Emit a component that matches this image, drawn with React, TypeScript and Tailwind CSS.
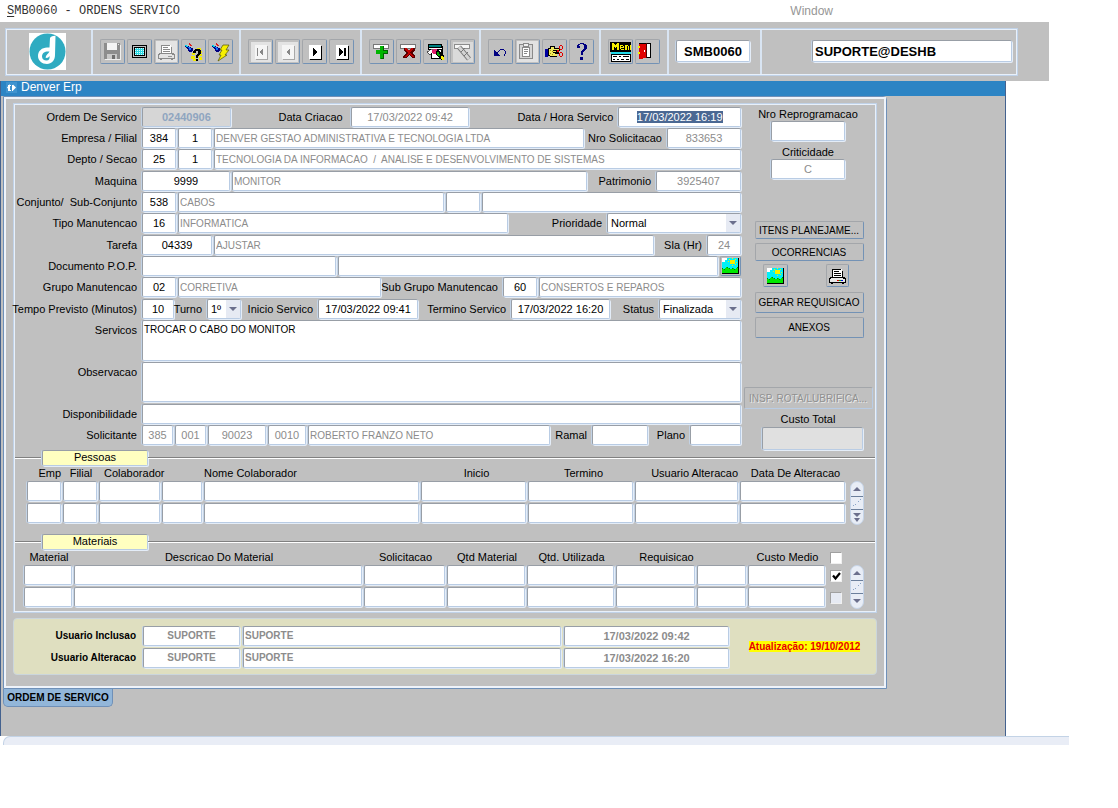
import React, { useEffect, useRef } from "react";

/* ---------- form primitives ---------- */

const BOX =
  "min-w-0 rounded-[2px] border border-t-[#989ea6] border-l-[#989ea6] border-r-[#b9cce4] border-b-[#b9cce4] shadow-[1px_1px_0_#e4edf8,-1px_0_0_#c3d3e6] outline-none";

type FieldProps = {
  id: string;
  label?: string;
  value?: string;
  w?: string;
  tone?: string;
  align?: string;
  h?: string;
};

function Field({
  id,
  label,
  value = "",
  w = "flex-1",
  tone = "bg-white text-black",
  align = "text-center text-[11px]",
  h = "h-5",
}: FieldProps) {
  return (
    <input
      id={id}
      aria-label={label}
      defaultValue={value}
      className={`${BOX} ${h} ${w} ${tone} ${align} px-px`}
    />
  );
}

const DIM = "bg-white text-[#8c8c8c]";
const NAME = "text-left text-[10px]";

function Label({
  to,
  w = "w-[125px]",
  children,
}: {
  to: string;
  w?: string;
  children: React.ReactNode;
}) {
  return (
    <label
      htmlFor={to}
      className={`${w} flex h-5 shrink-0 items-center justify-end pr-[3px] whitespace-pre`}
    >
      {children}
    </label>
  );
}

function Row({ children, h = "h-[21px]" }: { children: React.ReactNode; h?: string }) {
  return <div className={`flex ${h} items-start gap-[2px]`}>{children}</div>;
}

function Select({
  id,
  value,
  options,
  w,
}: {
  id: string;
  value: string;
  options: string[];
  w: string;
}) {
  return (
    <div className={`grid ${w} h-5 shrink-0`}>
      <select
        id={id}
        defaultValue={value}
        className={`${BOX} col-start-1 row-start-1 h-5 w-full appearance-none bg-white pl-[3px] text-[11px] text-black`}
      >
        {options.map((o) => (
          <option key={o}>{o}</option>
        ))}
      </select>
      <span className="pointer-events-none col-start-1 row-start-1 my-px mr-px flex w-[14px] items-center justify-center justify-self-end bg-[#e6eaf3]">
        <svg width="8" height="4" viewBox="0 0 8 4">
          <path d="M0 0h8L4 4z" fill="#6b6f8c" />
        </svg>
      </span>
    </div>
  );
}

const BTN =
  "flex items-center justify-center rounded-[2px] border border-t-[#a3a6aa] border-l-[#a3a6aa] border-r-[#7392b5] border-b-[#7392b5] bg-[#c0c0c0]";

function TextButton({ children, h }: { children: React.ReactNode; h: string }) {
  return (
    <button type="button" className={`${BTN} ${h} w-[109px] text-[10px] whitespace-nowrap text-black`}>
      {children}
    </button>
  );
}

/* ---------- icons ---------- */

function Icon({ children }: { children: React.ReactNode }) {
  return (
    <svg width="23" height="23" viewBox="1 1 23 23" shapeRendering="crispEdges" className="shrink-0">
      {children}
    </svg>
  );
}

const SaveIcon = (
  <Icon>
    <path d="M4 4h16v17H5l-1-1z" fill="#8d8d8d" />
    <path d="M7 4h10v7H7z" fill="#f4f4f4" />
    <path d="M7 15h10v5H7z" fill="#c9c9c9" />
    <path d="M12 16h3v4h-3z" fill="#6f6f6f" />
    <path d="M18 5h1v1h-1z" fill="#e8e8e8" />
    <path d="M5 21h16V6h-1v14H5z" fill="#efefef" />
  </Icon>
);

const ScreenIcon = (
  <Icon>
    <rect x="5" y="6" width="15" height="13" rx="1" fill="#000" />
    <path d="M6 7h13v11H6z" fill="#c0c0c0" />
    <path d="M7 8h11v9H7z" fill="#000" />
    <path d="M8 9h9v7H8z" fill="#2fd8e2" />
    <path
      d="M8 9h1v1H8zM10 9h1v1h-1zM12 9h1v1h-1zM14 9h1v1h-1zM16 9h1v1h-1zM8 11h1v1H8zM10 11h1v1h-1zM12 11h1v1h-1zM14 11h1v1h-1zM16 11h1v1h-1zM8 13h1v1H8zM10 13h1v1h-1zM12 13h1v1h-1zM14 13h1v1h-1zM16 13h1v1h-1zM8 15h1v1H8zM10 15h1v1h-1zM12 15h1v1h-1zM14 15h1v1h-1zM16 15h1v1h-1z"
      fill="#d8ffff"
    />
  </Icon>
);

function Printer({ dim = false }: { dim?: boolean }) {
  const ink = dim ? "#8a8a8a" : "#000";
  return (
    <Icon>
      {dim && <path d="M2 2h21v21H2z" fill="#e4e4e4" />}
      <path d="M7 6h10v9H7z" fill="#fff" />
      <path d="M7 6h9v1H8v7H7zM17 8h1v7h-1z" fill={ink} />
      <path d="M9 8h5v1H9zM9 10h7v1H9zM9 12h7v1H9z" fill={ink} />
      <path d="M5 14h14l2 2v4H4v-4z" fill={ink} />
      <path d="M6 15h12v1H6zM5 16h15v3H5z" fill={dim ? "#e4e4e4" : "#e8e8e8"} />
      <path d="M6 20h2v1H6zM17 20h2v1h-2z" fill={ink} />
      {dim ? (
        <path d="M14 17h4v1h-4z" fill="#999" />
      ) : (
        <>
          <path d="M12 17h2v1h-2z" fill="#e00000" />
          <path d="M14 17h2v1h-2z" fill="#00b000" />
          <path d="M16 17h2v1h-2z" fill="#0000e0" />
        </>
      )}
    </Icon>
  );
}

const Torch = (
  <>
    <path d="M4 6h2v1h2v1h2v1h2v3h-1v1H8v-1H7v-2H6V9H5V8H4z" fill="#000080" />
    <path d="M4 6h2v1h1v1H5V7H4z" fill="#00d8e8" />
    <path d="M8 4h1v1h1v1h1v1H9V6H8z" fill="#e02020" />
    <path d="M7 8h2v1h1v2H8V9H7z" fill="#1070ff" />
    <path d="M10 7h1v2h-1z" fill="#c0c0c0" />
  </>
);

const QueryIcon = (
  <Icon>
    {Torch}
    <path
      d="M16 9h4v2h-4zM17 12h4v2h-4zM11 14h3v2h-3zM18 15h3v2h-3zM10 17h4v3h-4zM18 18h3v3h-3zM12 20h3v2h-3zM16 16h2v2h-2z"
      fill="#f2ea00"
    />
    <path d="M12 14v-2l2-2h4l2 2v3l-3 2v2h-2v-3l2-2v-2h-2v2z" fill="#000" />
    <path d="M15 20h2v2h-2z" fill="#000" />
  </Icon>
);

const RunQueryIcon = (
  <Icon>
    {Torch}
    <path
      d="M15 6h6l-3 5h3l-4 5h2l-9 6 3-6h-2l3-5h-2z"
      fill="#f7f000"
      stroke="#555500"
      strokeWidth=".7"
      shapeRendering="auto"
    />
  </Icon>
);

function NavIcon({ d, dim = false }: { d: string; dim?: boolean }) {
  return (
    <Icon>
      {dim && <path d="M3 3h20v20H3z" fill="#e3e3e3" />}
      <path d="M8 7h12v14H8z" fill={dim ? "#a8a8a8" : "#000"} />
      <path d="M7 6h12v14H7z" fill={dim ? "#f5f5f5" : "#fff"} />
      <path d={d} fill={dim ? "#888" : "#000"} />
    </Icon>
  );
}

const InsertIcon = (
  <Icon>
    <path d="M4 5h16v5H4z" fill="#777" />
    <path d="M5 6h14v3H5z" fill="#fff" />
    <path d="M11 7h4v4h4v4h-4v5h-4v-5H7v-4h4z" fill="#00b400" />
    <path d="M14 7h1v4h4v4h-4v5h-3v-1h2v-5h4v-2h-4z" fill="#006400" />
  </Icon>
);

const DeleteIcon = (
  <Icon>
    <path d="M4 5h16v5H4z" fill="#777" />
    <path d="M5 6h14v3H5z" fill="#fff" />
    <path d="M8 9h3l2 3 2-3h4v2l-3 3 3 3v2h-3l-3-3-3 3H7v-2l3-3-2-3z" fill="#5a0000" />
    <path d="M9 9h2l2 3 2-3h2v1l-3 4 4 4h-2l-3-3-3 3H9l3-4-3-4z" fill="#c00000" />
  </Icon>
);

const EditIcon = (
  <Icon>
    <path d="M5 5h14v2h1v13H8v-9H5z" fill="#000" />
    <path d="M6 6h12v2H6z" fill="#008080" />
    <path d="M6 9h13v1H6z" fill="#fff" />
    <path d="M9 11h9v8H9z" fill="#fff" />
    <path d="M4 13l5-3 2 1-4 5z" fill="#fff" stroke="#000" strokeWidth=".6" />
    <path d="M10 10h4v3l-2 2h-2l-1-2z" fill="#e0206c" />
    <path d="M14 11h2l5 6v4h-3l-5-6v-3z" fill="#000" />
    <path d="M14 13h2v2h1v2h-2v-1h-1z" fill="#00a000" />
    <path d="M18 17h2v1h1v3h-2v-1h-1z" fill="#f7f000" />
  </Icon>
);

const WandIcon = (
  <Icon>
    <path d="M3 3h20v20H3z" fill="#dadada" />
    <path d="M4 5h16v5H4z" fill="#8c8c8c" />
    <path d="M5 6h14v3H5z" fill="#f6f6f6" />
    <path d="M9 8l10 12" stroke="#777" strokeWidth="5" shapeRendering="auto" />
    <path d="M9 8l10 12" stroke="#d4d4d4" strokeWidth="3" shapeRendering="auto" />
    <path d="M11 13l4-4M14 17l4-4" stroke="#777" shapeRendering="auto" />
  </Icon>
);

const UndoIcon = (
  <Icon>
    <path d="M6 11h1v1h1v1h1v1h1v1h1v1h1v1H6z" fill="#000080" />
    <path d="M9 13h1v-1h1v-1h1v-1h4v1h1v1h1v3h-1v2h-1v-2h1v-3h-1v-1h-4v1h-1v1h-1v1H9z" fill="#000080" />
  </Icon>
);

const ClipboardIcon = (
  <Icon>
    <path d="M2 2h21v21H2z" fill="#e2e2e2" />
    <path d="M4 5h14v15H4z" fill="#8a8a8a" />
    <path d="M5 6h12v13H5z" fill="#d6d6d6" />
    <path d="M7 8h8v10H7z" fill="#8a8a8a" />
    <path d="M8 9h6v8H8z" fill="#fff" />
    <path d="M8 4h6v4H8z" fill="#8a8a8a" />
    <path d="M9 5h4v2H9z" fill="#f0f0f0" />
    <path d="M9 10h4v1H9zM9 12h4v1H9zM9 14h3v1H9z" fill="#8a8a8a" />
  </Icon>
);

const HandIcon = (
  <Icon>
    <path d="M3 10h3v8H3z" fill="#0000a0" />
    <path d="M6 9h2V7h5v2h5v3h-3v1h2v2h-2v3H8v-1H6z" fill="#000" />
    <path d="M7 10h2V8h3v2h5v1h-6v1h3v1h-3v1h5v-1h0v1h-3v1h2v2H8v-1H7z" fill="#f2ea60" />
    <path d="M8 11h1v1H8zM10 12h1v1h-1zM8 14h1v1H8zM10 15h1v1h-1z" fill="#a09800" />
    <path
      d="M18 6h2v1h1v3h-1v1h-2v-1h-1V7h1zM18 8v2h2V7h-2zM18 13h2v1h1v3h-1v1h-2v-1h-1v-3h1zM18 15v2h2v-3h-2zM15 11h2v1h-2zM15 13h2v-1h-2z"
      fill="#e00000"
      fillRule="evenodd"
    />
  </Icon>
);

const HelpIcon = (
  <Icon>
    <path d="M8 9V6h1V5h2V4h4v1h2v1h1v4h-1v1h-1v1h-1v1h-1v3h-2v-4h1v-1h1v-1h1V6h-1V5h-3v1h-1v1h1v2z" fill="#000080" />
    <path d="M11 18h3v3h-3z" fill="#000080" />
  </Icon>
);

const MenuIcon = (
  <Icon>
    <path d="M2 3h21v10H2z" fill="#000" />
    <path
      d="M4 4h2v1h1v1h1V5h1V4h2v7H9V8H8v1H7V8H6v3H4zM12 6h3v1h1v2h-3v1h3v1h-3v-1h-1zM13 7v1h2V7zM17 6h3v1h1v4h-1V7h-1v4h-2zM22 6h1v5h-1z"
      fill="#f7f000"
      fillRule="evenodd"
    />
    <path d="M3 13h20v2H3z" fill="#20d8e8" />
    <path d="M3 15h20v8H3z" fill="#000" />
    <path d="M4 16h18v6H4z" fill="#fff" />
    <path d="M5 17h4v1H5zM11 17h2v1h-2zM15 17h6v1h-6zM5 20h2v1H5zM9 20h2v1H9zM13 20h3v1h-3zM18 20h3v1h-3z" fill="#000" />
  </Icon>
);

const ExitIcon = (
  <Icon>
    <path d="M4 4h12v15H4z" fill="#000" />
    <path d="M5 5h10v13H5z" fill="#fff" />
    <path d="M5 5h6v14H8v1H4V5z" fill="#e00000" />
    <path d="M3 7h2v2H3zM3 13h2v2H3z" fill="#f7f000" />
    <path d="M9 11h1v2H9z" fill="#fff" />
    <path d="M11 4h1v15h-1z" fill="#500000" />
  </Icon>
);

function Landscape() {
  return (
    <svg width="17" height="16" viewBox="0 0 17 16" shapeRendering="crispEdges">
      <path d="M0 0h17v16H0z" fill="#000" />
      <path d="M0 0h16v15H0z" fill="#00f0f8" />
      <path d="M0 0h5v2H3v2H0z" fill="#fff" />
      <path d="M8 2h5v4H8z" fill="#f7f000" />
      <path d="M10 0h1v1h-1zM6 3h1v1H6zM14 4h1v1h-1zM10 7h1v1h-1zM7 1h1v1H7zM13 1h1v1h-1zM13 6h1v1h-1z" fill="#f7f000" />
      <path d="M0 10l2 1 3-2 3 2 3-1 2 1 3-2v6H0z" fill="#00e800" />
      <path d="M0 10h1v1H0zM2 11h1v1H2zM5 9h1v1H5zM7 10h1v1H7zM10 10h1v1h-1zM12 11h1v1h-1zM15 9h1v1h-1z" fill="#008000" />
    </svg>
  );
}

function Logo() {
  return (
    <svg width="37" height="37" viewBox="0 0 37 37" role="img" aria-label="Denver">
      <path d="M0 0h37v37H0z" fill="#fff" />
      <circle cx="18.5" cy="18.5" r="18" fill="#2fabc1" />
      <path
        d="M21 5c1-2 5-2.500 5.500-2L26 22c0 5.500-3.500 9-8 9-5 0-9-3.500-9-8 0-5 4-8.500 9-8.500l2.500 0z"
        fill="#fff"
      />
      <path
        d="M20.500 18.500c-4.500-.5-7.500 1.500-7.500 5 0 2.500 2 4 4.500 4 2.500 0 3.500-2 3-4.500-1 2-3 2.500-4 1.500 .500-3 3-3.500 4-6z"
        fill="#2fabc1"
      />
    </svg>
  );
}

/* ---------- toolbar ---------- */

type Tool = [string, React.ReactNode];

const TOOL_GROUPS: { w: string; tools: Tool[] }[] = [
  {
    w: "w-[148px]",
    tools: [
      ["Salvar", SaveIcon],
      ["Tela", ScreenIcon],
      ["Imprimir", <Printer dim />],
      ["Entrar consulta", QueryIcon],
      ["Executar consulta", RunQueryIcon],
    ],
  },
  {
    w: "w-[121px]",
    tools: [
      ["Primeiro", <NavIcon dim d="M9 9h1v8H9zM15 9v8l-4-4z" />],
      ["Anterior", <NavIcon dim d="M15 9v8l-4-4z" />],
      ["Próximo", <NavIcon d="M11 9v8l4-4z" />],
      ["Último", <NavIcon d="M10 9v8l4-4zM15 9h2v8h-2z" />],
    ],
  },
  {
    w: "w-[119px]",
    tools: [
      ["Inserir", InsertIcon],
      ["Excluir", DeleteIcon],
      ["Editar", EditIcon],
      ["Limpar", WandIcon],
    ],
  },
  {
    w: "w-[120px]",
    tools: [
      ["Desfazer", UndoIcon],
      ["Colar", ClipboardIcon],
      ["Recortar", HandIcon],
      ["Ajuda", HelpIcon],
    ],
  },
  {
    w: "w-[68px]",
    tools: [
      ["Menu", MenuIcon],
      ["Sair", ExitIcon],
    ],
  },
];

const SEG = "flex shrink-0 items-center border-r-2 border-[#d9e5f3] pb-[2px]";
const FRAME = "border border-[#c0d2e8] p-px shadow-[inset_0_0_0_1px_#e8f0fa]";

function Toolbar() {
  return (
    <div className="mr-[69px] bg-[#c0c0c0] pt-[6px] pr-[31px] pb-[5px] pl-[5px]">
      <div className={`${FRAME} flex h-12`}>
        <div className={`${SEG} w-[86px] pl-[22px]`}>
          <Logo />
        </div>
        {TOOL_GROUPS.map((g) => (
          <div key={g.w} className={`${SEG} ${g.w} gap-[2px] pl-[7px]`}>
            {g.tools.map(([name, icon]) => (
              <button key={name} type="button" aria-label={name} className={`${BTN} h-[25px] w-[25px]`}>
                {icon}
              </button>
            ))}
          </div>
        ))}
        <div className={`${SEG} w-[93px] pl-[7px]`}>
          <input
            aria-label="Programa"
            defaultValue="SMB0060"
            className={`${BOX} h-[22px] w-[74px] bg-white text-center text-[13px] font-bold`}
          />
        </div>
        <div className="flex flex-1 items-center pr-1 pb-[2px] pl-[50px]">
          <input
            aria-label="Usuario"
            defaultValue="SUPORTE@DESHB"
            className={`${BOX} h-[22px] w-full bg-white pl-[2px] text-[13px] font-bold`}
          />
        </div>
      </div>
    </div>
  );
}

/* ---------- main form ---------- */

function ServiceDate() {
  const ref = useRef<HTMLInputElement>(null);
  useEffect(() => {
    ref.current?.focus();
    ref.current?.select();
  }, []);
  return (
    <input
      id="dataServico"
      ref={ref}
      defaultValue="17/03/2022 16:19"
      className={`${BOX} h-5 w-[123px] bg-white text-center text-[11px] selection:bg-[#4a6893] selection:text-white`}
    />
  );
}

function MainForm() {
  return (
    <div className="flex min-w-0 flex-1 flex-col gap-px">
      <div>
        <Row>
          <Label to="ordem">Ordem De Servico</Label>
          <Field id="ordem" value="02440906" w="w-[89px]" tone="bg-[#d6d6d6] font-bold text-[#8fa5c0]" />
          <Label to="criacao" w="w-[116px] grow">Data Criacao </Label>
          <Field id="criacao" value="17/03/2022 09:42" w="w-[119px]" tone={DIM} />
          <Label to="dataServico" w="w-[145px] grow">Data / Hora Servico</Label>
          <ServiceDate />
        </Row>
        <Row>
          <Label to="empresa">Empresa / Filial</Label>
          <Field id="empresa" value="384" w="w-[34px]" />
          <Field id="filial" label="Filial" value="1" w="w-[34px]" />
          <Field id="empresaNome" label="Nome da empresa" value="DENVER GESTAO ADMINISTRATIVA E TECNOLOGIA LTDA" tone={DIM} align={NAME} />
          <Label to="solicitacao" w="w-[79px]">Nro Solicitacao</Label>
          <Field id="solicitacao" value="833653" w="w-[74px]" tone={DIM} />
        </Row>
        <Row>
          <Label to="depto">Depto / Secao</Label>
          <Field id="depto" value="25" w="w-[34px]" />
          <Field id="secao" label="Secao" value="1" w="w-[34px]" />
          <Field id="deptoNome" label="Nome do depto" value="TECNOLOGIA DA INFORMACAO  /  ANALISE E DESENVOLVIMENTO DE SISTEMAS" tone={DIM} align={NAME} />
        </Row>
      </div>
      <div>
        <Row>
          <Label to="maquina">Maquina</Label>
          <Field id="maquina" value="9999" w="w-[88px]" />
          <Field id="maquinaNome" label="Nome da maquina" value="MONITOR" tone={DIM} align={NAME} />
          <Label to="patrimonio" w="w-[65px]">Patrimonio</Label>
          <Field id="patrimonio" value="3925407" w="w-[85px]" tone={DIM} />
        </Row>
        <Row>
          <Label to="conjunto">{"Conjunto/  Sub-Conjunto"}</Label>
          <Field id="conjunto" value="538" w="w-[34px]" />
          <Field id="conjuntoNome" label="Nome do conjunto" value="CABOS" tone={DIM} align={NAME} />
          <Field id="sub" label="Sub-Conjunto" w="w-[34px]" />
          <Field id="subNome" label="Nome do sub-conjunto" w="w-[259px]" />
        </Row>
        <Row>
          <Label to="tipo">Tipo Manutencao</Label>
          <Field id="tipo" value="16" w="w-[34px]" />
          <Field id="tipoNome" label="Nome do tipo" value="INFORMATICA" tone={DIM} align={NAME} />
          <Label to="prioridade" w="w-[95px]">Prioridade</Label>
          <Select id="prioridade" value="Normal" options={["Normal", "Alta"]} w="w-[134px]" />
        </Row>
      </div>
      <div>
        <Row>
          <Label to="tarefa">Tarefa</Label>
          <Field id="tarefa" value="04339" w="w-[70px]" />
          <Field id="tarefaNome" label="Nome da tarefa" value="AJUSTAR" tone={DIM} align={NAME} />
          <Label to="sla" w="w-[49px]">Sla (Hr)</Label>
          <Field id="sla" value="24" w="w-[34px]" tone={DIM} />
        </Row>
        <Row>
          <Label to="pop">Documento P.O.P.</Label>
          <Field id="pop" w="w-[194px]" align={NAME} />
          <Field id="popNome" label="Nome do documento" align={NAME} />
          <button type="button" aria-label="Ver documento" className={`${BTN} h-5 w-[21px]`}>
            <Landscape />
          </button>
        </Row>
        <Row>
          <Label to="grupo">Grupo Manutencao</Label>
          <Field id="grupo" value="02" w="w-[34px]" />
          <Field id="grupoNome" label="Nome do grupo" value="CORRETIVA" tone={DIM} align={NAME} />
          <Label to="subgrupo" w="w-[118px]">Sub Grupo Manutencao</Label>
          <Field id="subgrupo" value="60" w="w-[34px]" />
          <Field id="subgrupoNome" label="Nome do sub grupo" value="CONSERTOS E REPAROS" w="w-[202px]" tone={DIM} align={NAME} />
        </Row>
      </div>
      <div>
        <Row>
          <Label to="tempo">Tempo Previsto (Minutos)</Label>
          <Field id="tempo" value="10" w="w-8" />
          <Label to="turno" w="w-[29px]">Turno</Label>
          <Select id="turno" value="1º" options={["1º", "2º", "3º"]} w="w-[34px]" />
          <Label to="inicio" w="w-[73px] grow">Inicio Servico</Label>
          <Field id="inicio" value="17/03/2022 09:41" w="w-[100px]" />
          <Label to="termino" w="w-[89px] grow">Termino Servico</Label>
          <Field id="termino" value="17/03/2022 16:20" w="w-[99px]" />
          <Label to="status" w="w-[45px] grow">Status</Label>
          <Select id="status" value="Finalizada" options={["Finalizada", "Aberta"]} w="w-[82px]" />
        </Row>
        <Row h="h-[42px]">
          <Label to="servicos">Servicos</Label>
          <textarea
            id="servicos"
            defaultValue="TROCAR O CABO DO MONITOR"
            className={`${BOX} h-[41px] flex-1 resize-none bg-white px-px pt-[2px] text-[10px] leading-[14px]`}
          />
        </Row>
        <Row h="h-[41px]">
          <Label to="observacao">Observacao</Label>
          <textarea id="observacao" className={`${BOX} h-10 flex-1 resize-none bg-white px-px`} />
        </Row>
      </div>
      <div>
        <Row>
          <Label to="disponibilidade">Disponibilidade</Label>
          <Field id="disponibilidade" align={NAME} />
        </Row>
        <Row>
          <Label to="solicitante">Solicitante</Label>
          <Field id="solicitante" value="385" w="w-[31px]" tone={DIM} />
          <Field id="solFilial" label="Filial do solicitante" value="001" w="w-[31px]" tone={DIM} />
          <Field id="solCodigo" label="Codigo do solicitante" value="90023" w="w-[58px]" tone={DIM} />
          <Field id="solSetor" label="Setor do solicitante" value="0010" w="w-[38px]" tone={DIM} />
          <Field id="solNome" label="Nome do solicitante" value="ROBERTO FRANZO NETO" tone={DIM} align={NAME} />
          <Label to="ramal" w="w-[38px]">Ramal</Label>
          <Field id="ramal" w="w-14" />
          <Label to="plano" w="w-[38px]">Plano</Label>
          <Field id="plano" w="w-[51px]" />
        </Row>
      </div>
    </div>
  );
}

function SidePanel() {
  return (
    <div className="flex w-[134px] shrink-0 flex-col items-center">
      <label htmlFor="reprog" className="leading-[14px]">Nro Reprogramacao</label>
      <Field id="reprog" w="w-[74px]" />
      <label htmlFor="criticidade" className="mt-1 leading-[14px]">Criticidade</label>
      <Field id="criticidade" value="C" w="w-[74px]" tone={DIM} />
      <div className="mt-[42px] flex flex-col items-center gap-1 pl-[2px]">
        <TextButton h="h-[18px]">ITENS PLANEJAME...</TextButton>
        <TextButton h="h-[18px]">OCORRENCIAS</TextButton>
      </div>
      <div className="mt-[3px] flex gap-[38px] pr-1">
        <button type="button" aria-label="Imagem" className={`${BTN} h-[23px] w-[25px]`}>
          <Landscape />
        </button>
        <button type="button" aria-label="Imprimir ordem" className={`${BTN} h-[23px] w-[23px]`}>
          <Printer />
        </button>
      </div>
      <div className="mt-[5px] flex flex-col items-center gap-1 pl-[2px]">
        <TextButton h="h-[21px]">GERAR REQUISICAO</TextButton>
        <TextButton h="h-[21px]">ANEXOS</TextButton>
      </div>
      <button
        type="button"
        disabled
        className="mt-[49px] h-[22px] w-[129px] rounded-[2px] border border-t-[#a3a6aa] border-r-[#b9cce4] border-b-[#b9cce4] border-l-[#a3a6aa] text-[10px] whitespace-nowrap text-[#909090] text-shadow-[1px_1px_0_#e8e8e8]"
      >
        INSP. ROTA/LUBRIFICA...
      </button>
      <label htmlFor="custoTotal" className="mt-[3px] leading-[14px]">Custo Total</label>
      <div className="flex w-full justify-center pt-px pl-2">
        <Field id="custoTotal" w="w-[101px]" tone="bg-[#e0e0e0]" h="h-[23px]" />
      </div>
    </div>
  );
}

/* ---------- detail blocks ---------- */

function SectionTitle({ children }: { children: React.ReactNode }) {
  const line = "h-[2px] border-t border-b border-t-[#808080] border-b-white";
  return (
    <div className="flex h-[17px] items-center">
      <div className={`${line} w-[27px]`} />
      <h2 className={`${BOX} flex h-4 w-[106px] items-center justify-center bg-[#ffffc0]`}>{children}</h2>
      <div className={`${line} flex-1`} />
    </div>
  );
}

function Scroller({ fast = false }: { fast?: boolean }) {
  return (
    <div className="mt-[15px] flex h-[44px] w-[14px] shrink-0 flex-col overflow-hidden rounded-[7px] border border-[#c5d4e8] bg-[#e8edf6]">
      <button type="button" aria-label="Subir" className="flex flex-1 items-center justify-center border-b border-[#6b7f9c]">
        <svg width="8" height="4" viewBox="0 0 8 4"><path d="M0 4h8L4 0z" fill="#6b6f8c" /></svg>
      </button>
      <div className="flex h-3 items-center justify-center">
        <svg width="8" height="8" viewBox="0 0 8 8" shapeRendering="crispEdges">
          <path d="M0 6h1v1H0zM2 5h1v1H2zM5 2h1v1H5zM7 0h1v1H7z" fill="#8aa5c8" />
        </svg>
      </div>
      <button type="button" aria-label="Descer" className="flex flex-1 items-center justify-center border-t border-[#6b7f9c]">
        {fast ? (
          <svg width="8" height="9" viewBox="0 0 8 9"><path d="M0 0h8L4 4zM1 5h6L4 9z" fill="#6b6f8c" /></svg>
        ) : (
          <svg width="8" height="4" viewBox="0 0 8 4"><path d="M0 0h8L4 4z" fill="#6b6f8c" /></svg>
        )}
      </button>
    </div>
  );
}

type Column = { name: string; w: string; th: string };

const PEOPLE: Column[] = [
  { name: "Emp", w: "w-[36px]", th: "text-right pr-[2px]" },
  { name: "Filial", w: "w-[36px]", th: "text-center" },
  { name: "Colaborador", w: "w-[63px]", th: "text-left pl-[5px]" },
  { name: "", w: "w-[42px]", th: "" },
  { name: "Nome Colaborador", w: "", th: "text-left" },
  { name: "Inicio", w: "w-[107px]", th: "text-center pl-1" },
  { name: "Termino", w: "w-[107px]", th: "text-center pl-1" },
  { name: "Usuario Alteracao", w: "w-[105px]", th: "text-right pr-[2px]" },
  { name: "Data De Alteracao", w: "w-[107px]", th: "text-center pl-1" },
];

const MATERIALS: Column[] = [
  { name: "Material", w: "w-[50px]", th: "text-center" },
  { name: "Descricao Do Material", w: "", th: "text-center" },
  { name: "Solicitacao", w: "w-[83px]", th: "text-center" },
  { name: "Qtd Material", w: "w-[80px]", th: "text-center" },
  { name: "Qtd. Utilizada", w: "w-[89px]", th: "text-center" },
  { name: "Requisicao", w: "w-[81px]", th: "text-center pl-5" },
  { name: "", w: "w-[51px]", th: "" },
  { name: "Custo Medio", w: "w-[79px]", th: "text-center" },
];

function Check({ label, checked = false, bg = "bg-white" }: { label: string; checked?: boolean; bg?: string }) {
  return (
    <span className="ml-[3px] grid h-3 w-3">
      <input
        type="checkbox"
        aria-label={label}
        defaultChecked={checked}
        className={`peer col-start-1 row-start-1 h-3 w-3 appearance-none border border-t-[#a0a0a0] border-r-[#f0f0f0] border-b-[#f0f0f0] border-l-[#a0a0a0] ${bg}`}
      />
      <svg viewBox="0 0 12 12" className="pointer-events-none invisible col-start-1 row-start-1 h-3 w-3 peer-checked:visible">
        <path d="M3 5.500l2.500 3L10 3" fill="none" stroke="#000" strokeWidth="2.200" />
      </svg>
    </span>
  );
}

function DetailTable({ id, columns, checks = false }: { id: string; columns: Column[]; checks?: boolean }) {
  return (
    <table className="w-full min-w-0 flex-1 table-fixed border-collapse self-start">
      <thead>
        <tr className="h-[15px]">
          {columns.map((c, i) => (
            <th key={i} scope="col" className={`${c.w} ${c.th} p-0 leading-[15px] font-normal whitespace-nowrap`}>
              {c.name}
            </th>
          ))}
          {checks && (
            <th className="w-5 p-0">
              <Check label="Selecionar todos" />
            </th>
          )}
        </tr>
      </thead>
      <tbody>
        {[0, 1].map((r) => (
          <tr key={r} className="h-[22px]">
            {columns.map((c, i) => (
              <td key={i} className="h-[22px] p-0 pr-[2px] align-top">
                <Field id={`${id}-${r}-${i}`} label={`${c.name || "Complemento"} ${r + 1}`} w="w-full block" />
              </td>
            ))}
            {checks && (
              <td className="p-0 align-middle">
                <Check label={`Linha ${r + 1}`} checked={r === 0} bg={r === 0 ? "bg-white" : "bg-[#e6eaf3]"} />
              </td>
            )}
          </tr>
        ))}
      </tbody>
    </table>
  );
}

const AUDIT = [
  { id: "inc", name: "Usuario Inclusao", date: "17/03/2022 09:42" },
  { id: "alt", name: "Usuario Alteracao", date: "17/03/2022 16:20" },
];

const BOLD_DIM = "bg-white font-bold text-[#8c8c8c]";

function Audit() {
  return (
    <section className="mt-[5px] flex h-[57px] items-center rounded-[4px] border border-[#cbd6dc] bg-[#dfdfc0]">
      <div className="flex flex-1 flex-col gap-[2px]">
        {AUDIT.map((a) => (
          <div key={a.id} className="flex items-center gap-[3px]">
            <label htmlFor={a.id} className="w-[126px] pr-1 text-right text-[10px] font-bold">
              {a.name}
            </label>
            <Field id={a.id} value="SUPORTE" w="w-[97px]" tone={BOLD_DIM} align="text-center text-[10px]" />
            <Field id={`${a.id}-nome`} label={`${a.name} nome`} value="SUPORTE" tone={BOLD_DIM} align={NAME} />
            <Field id={`${a.id}-data`} label={`${a.name} data`} value={a.date} w="w-[165px]" tone={BOLD_DIM} />
          </div>
        ))}
      </div>
      <p className="w-[147px] pl-1 text-center text-[10px] leading-3 font-bold whitespace-nowrap text-[#e80000]">
        <span className="bg-[#ffff00]">Atualização: 19/10/2012</span>
      </p>
    </section>
  );
}

export default function App() {
  return (
    <div className="min-h-screen bg-white font-['Liberation_Sans',Arial,sans-serif] text-[11px] text-black">
      <header className="flex h-[22px] items-center pl-[7px]">
        <h1 className="flex-1 font-['Liberation_Mono','Courier_New',monospace] text-[12px] text-[#333]">
          <span className="underline underline-offset-2">S</span>MB0060 - ORDENS SERVICO
        </h1>
        <button type="button" className="mr-[285px] text-[12px] text-[#969696]">Window</button>
      </header>

      <Toolbar />

      <main className="mr-[112px] border-r border-l border-[#44628f] bg-[#c0c0c0] pb-[29px]">
        <div className="flex h-[15px] items-center gap-1 bg-[#2c84c4] pb-[2px] pl-[5px] text-[12px] text-white">
          <svg width="11" height="11" viewBox="0 0 11 11">
            <path d="M0 0h11v11H0z" fill="#3f93cf" />
            <path d="M4 2v7L1 5.500zM7 2.500L10 5.500 7 8.500z" fill="#fff" />
            <path d="M2 3h3v1H3v4h2v1H2zM6 3h1v6H6z" fill="#fff" />
          </svg>
          <span className="leading-[13px]">Denver Erp</span>
        </div>

        <div className="mr-[118px] ml-[2px]">
          <div className="rounded-tr-[4px] border border-[#6f90b8]">
            <div className="border-2 border-[#eef3fa] px-[7px] pt-1 pb-[11px]">
              <div className={`${FRAME} pt-[3px] pb-[3px]`}>
                <div className="flex">
                  <MainForm />
                  <SidePanel />
                </div>
                <section className="-mt-px">
                  <SectionTitle>Pessoas</SectionTitle>
                  <div className="flex gap-[3px] pr-[11px] pl-3">
                    <DetailTable id="pessoa" columns={PEOPLE} />
                    <Scroller fast />
                  </div>
                </section>
                <section className="mt-2">
                  <SectionTitle>Materiais</SectionTitle>
                  <div className="flex gap-[3px] pr-[11px] pl-[9px]">
                    <DetailTable id="material" columns={MATERIALS} checks />
                    <Scroller />
                  </div>
                </section>
              </div>
              <Audit />
            </div>
          </div>
          <button
            type="button"
            className="block h-[18px] w-[110px] rounded-b-[5px] border border-t-0 border-[#6f90b8] bg-[#92b6d9] text-[10px] font-bold whitespace-nowrap"
          >
            ORDEM DE SERVICO
          </button>
        </div>
      </main>

      <footer className="mr-[49px] ml-[3px] h-[9px] rounded-tl-[7px] border-t border-l border-[#c3d3e6] bg-[#e9edf6]" />
    </div>
  );
}
